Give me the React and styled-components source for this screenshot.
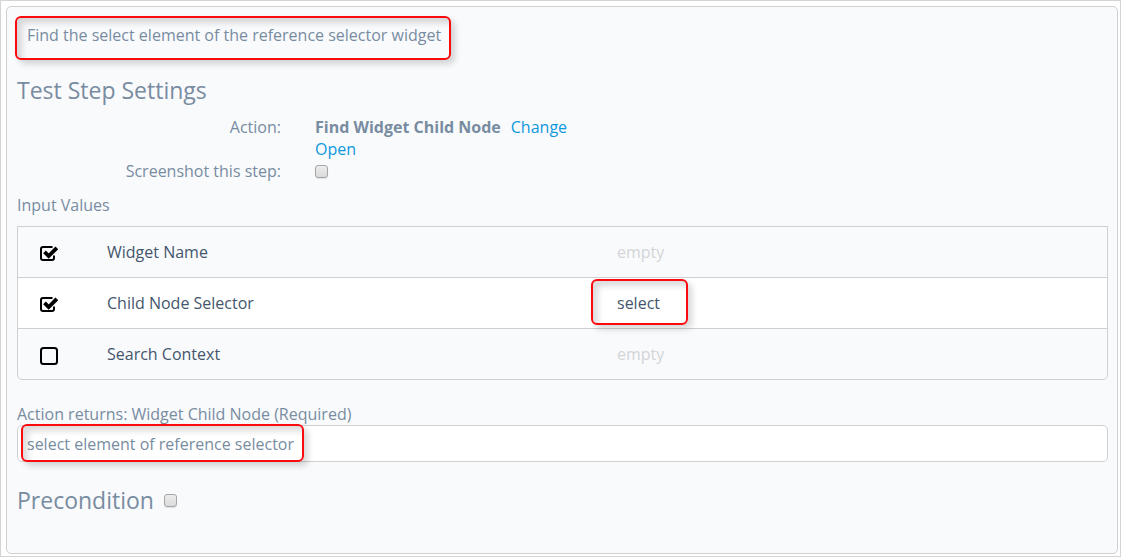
import React, { useState } from "react";
import styled, { createGlobalStyle } from "styled-components";

const GlobalStyle = createGlobalStyle`
  *, *::before, *::after { box-sizing: border-box; }
  body {
    margin: 0;
    background: #fff;
    color: #788ca1;
    font: 16px/22px "Open Sans", "Noto Sans", sans-serif;
  }
`;

const Frame = styled.div`
  display: flex;
  min-height: 100vh;
  padding: 5px 2px 2px 5px;
  border: 1px solid #d3d4d6;
`;

const Panel = styled.main`
  flex: 1;
  min-width: 0;
  padding: 8px 9px 36px 10px;
  border: 1px solid #ced0d2;
  border-radius: 5px;
  background: #f9fafc;
`;

const Highlight = styled.div`
  position: absolute;
  inset: ${(p) => p.$inset};
  border: 2px solid #fb0a0e;
  border-radius: 6px;
  box-shadow: 4px 4px 6px rgba(0, 0, 0, 0.16), inset 5px 5px 6px rgba(0, 0, 0, 0.14);
  pointer-events: none;
`;

const Marked = styled.span`
  position: relative;
  display: inline-block;
`;

const Description = styled.p`
  margin: 0;
  padding: 9px 10px;
`;

const Heading = styled.h2`
  margin: 0;
  font-size: 23px;
  line-height: 32px;
  font-weight: 400;
`;

const SettingsHeading = styled(Heading)`
  margin: 19px 0 10px;
`;

const Settings = styled.div`
  display: grid;
  grid-template-columns: 264px 1fr;
  column-gap: 34px;
`;

const SettingLabel = styled.label`
  text-align: right;
`;

const SettingValue = styled.div`
  display: flex;
  flex-wrap: wrap;
  align-items: center;
  column-gap: 10px;
  max-width: 264px;
  min-height: 22px;
`;

const Link = styled.a`
  color: #0f98dc;
  text-decoration: none;
`;

const TickBox = styled.input`
  appearance: none;
  width: 13px;
  height: 13px;
  margin: 0;
  border: 1px solid #a6a6a6;
  border-radius: 3px;
  background: linear-gradient(#ececec, #dadada);
  box-shadow: 0 1px 1px rgba(0, 0, 0, 0.1);
  &:checked { background: #0f98dc; }
`;

const SectionLabel = styled.h3`
  margin: 12px 0 10px;
  font-size: 16px;
  line-height: 22px;
  font-weight: 400;
`;

const TableBox = styled.div`
  border: 1px solid #ced0d2;
  border-radius: 0 0 5px 5px;
`;

const InputsTable = styled.table`
  width: 100%;
  table-layout: fixed;
  border-collapse: collapse;
  color: #44566c;
`;

const Row = styled.tr`
  background: ${(p) => (p.$active ? "#fff" : "transparent")};
  & + & { border-top: 1px solid #ced0d2; }
`;

const Cell = styled.td`
  height: 51px;
  padding: 0;
  tr:first-child > & { height: 50px; }
`;

const IconCell = styled(Cell)`
  width: 89px;
  padding: 4px 0 0 22px;
`;

const ValueCell = styled(Cell)`
  padding-left: 10px;
  color: ${(p) => (p.$empty ? "#d3d5d7" : "inherit")};
`;

const Toggle = styled.label`
  position: relative;
  display: block;
  width: 18px;
  height: 18px;
  svg { display: block; }
`;

const ToggleInput = styled.input`
  position: absolute;
  inset: 0;
  width: 100%;
  height: 100%;
  margin: 0;
  opacity: 0;
`;

const ReturnLabel = styled.label`
  display: block;
  margin-top: 23px;
`;

const Field = styled.div`
  position: relative;
`;

const TextInput = styled.input`
  display: block;
  width: 100%;
  height: 37px;
  padding: 0 9px;
  border: 1px solid #ced0d2;
  border-radius: 5px;
  background: #fff;
  color: inherit;
  font: inherit;
`;

const FieldHighlight = styled(Highlight)`
  width: 283px;
`;

const Precondition = styled.div`
  display: flex;
  align-items: center;
  gap: 10px;
  margin-top: 22px;
`;

const ROWS = [
  { name: "Widget Name", value: "", enabled: true },
  { name: "Child Node Selector", value: "select", enabled: true },
  { name: "Search Context", value: "", enabled: false },
];

function InputRow({ name, value, enabled }) {
  const [checked, setChecked] = useState(enabled);
  return (
    <Row $active={!!value}>
      <IconCell>
        <Toggle>
          <ToggleInput
            type="checkbox"
            aria-label={name}
            checked={checked}
            onChange={(e) => setChecked(e.target.checked)}
          />
          <svg width="18" height="18" viewBox="0 0 18 18" fill="none" stroke="#000" aria-hidden="true">
            {checked ? (
              <>
                <path d="M12.500 2H3a2 2 0 0 0-2 2v9a2 2 0 0 0 2 2h9a2 2 0 0 0 2-2V10.500" strokeWidth="2" />
                <path d="M4.500 6.800L8.700 11L16.800 2.900" strokeWidth="3.800" />
              </>
            ) : (
              <rect x="1" y="1" width="16" height="16" rx="2.500" strokeWidth="2" />
            )}
          </svg>
        </Toggle>
      </IconCell>
      <Cell>{name}</Cell>
      <ValueCell $empty={!value}>
        {value ? (
          <Marked>
            {value}
            <Highlight $inset="-13px -28px -11px -26px" />
          </Marked>
        ) : (
          "empty"
        )}
      </ValueCell>
    </Row>
  );
}

export default function App() {
  return (
    <>
      <GlobalStyle />
      <Frame>
        <Panel>
          <Description>
            <Marked>
              Find the select element of the reference selector widget
              <Highlight $inset="-8px -10px -14px -12px" />
            </Marked>
          </Description>

          <SettingsHeading>Test Step Settings</SettingsHeading>
          <Settings>
            <SettingLabel as="span">Action:</SettingLabel>
            <SettingValue>
              <strong>Find Widget Child Node</strong>
              <Link href="#change">Change</Link>
              <Link href="#open">Open</Link>
            </SettingValue>
            <SettingLabel htmlFor="screenshot">Screenshot this step:</SettingLabel>
            <SettingValue>
              <TickBox id="screenshot" type="checkbox" />
            </SettingValue>
          </Settings>

          <SectionLabel>Input Values</SectionLabel>
          <TableBox>
            <InputsTable>
              <tbody>
                {ROWS.map((row) => (
                  <InputRow key={row.name} {...row} />
                ))}
              </tbody>
            </InputsTable>
          </TableBox>

          <ReturnLabel htmlFor="returns">Action returns: Widget Child Node (Required)</ReturnLabel>
          <Field>
            <TextInput id="returns" type="text" defaultValue="select element of reference selector" />
            <FieldHighlight $inset="-1px auto 0 4px" />
          </Field>

          <Precondition>
            <Heading>
              <label htmlFor="precondition">Precondition</label>
            </Heading>
            <TickBox id="precondition" type="checkbox" />
          </Precondition>
        </Panel>
      </Frame>
    </>
  );
}
